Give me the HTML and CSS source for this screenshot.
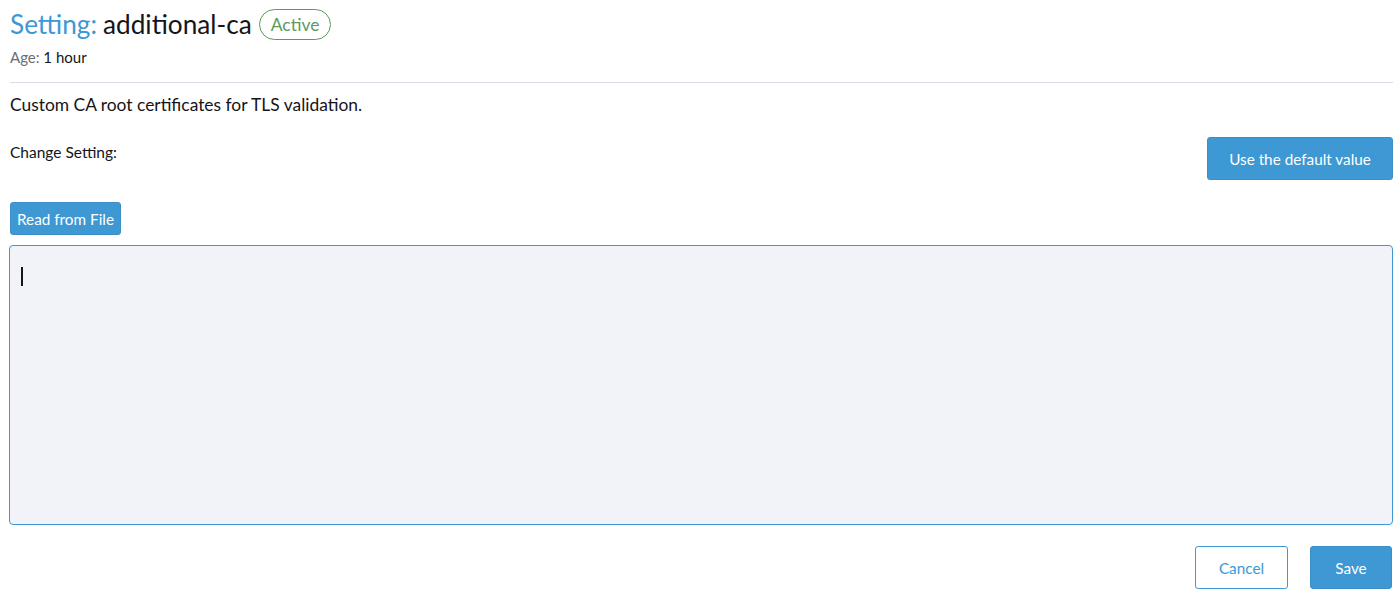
FILE: index.html
```html
<!DOCTYPE html>
<html>
<head>
<meta charset="utf-8">
<link rel="stylesheet" href="styles.css">
</head>
<body>
<div class="page">
  <header class="head">
    <h1 class="title"><span class="kind">Setting:</span> additional-ca <span class="badge">Active</span></h1>
    <div class="age"><span class="label">Age:</span> 1 hour</div>
  </header>
  <hr class="rule">
  <p class="desc">Custom CA root certificates for TLS validation.</p>
  <div class="change-row">
    <div class="change-label">Change Setting:</div>
    <button class="btn btn-primary btn-lg">Use the default value</button>
  </div>
  <div class="file-row">
    <button class="btn btn-primary btn-sm">Read from File</button>
  </div>
  <div class="editor"><span class="caret"></span></div>
  <div class="footer">
    <button class="btn btn-outline btn-lg">Cancel</button>
    <button class="btn btn-primary btn-lg btn-save">Save</button>
  </div>
</div>
</body>
</html>
```
FILE: styles.css
```css
* { box-sizing: border-box; }
html, body { margin: 0; padding: 0; background: #fff; }
body {
  font-family: Lato, "Open Sans", "Liberation Sans", sans-serif;
  color: #141419;
}
.page {
  padding: 0 7px 0 9px;
}
.head { padding-top: 8px; }
.title {
  margin: 0;
  font-size: 26.2px;
  font-weight: 400;
  line-height: 33px;
  display: flex;
  align-items: center;
  gap: 6px;
  padding-left: 1px;
}
.kind { color: #3d98d3; }
.badge {
  display: inline-block;
  font-size: 17.5px;
  color: #5d995d;
  border: 1px solid #5d995d;
  border-radius: 16px;
  padding: 0 11px;
  line-height: 29px;
  margin-left: 1px;
}
.age {
  margin-top: 7px;
  font-size: 15px;
  line-height: 18px;
  color: #141419;
  padding-left: 1px;
}
.age .label { color: #6c6c76; }
.rule {
  border: 0;
  border-top: 1px solid #dcdee7;
  margin: 16px 0 0 1px;
}
.desc {
  margin: 12px 0 0 1px;
  font-size: 17.4px;
  line-height: 20px;
}
.change-row {
  display: flex;
  justify-content: space-between;
  align-items: flex-start;
  margin-top: 22px;
}
.change-label {
  font-size: 15.5px;
  line-height: 18px;
  margin-top: 6px;
  margin-left: 1px;
}
.btn {
  font-family: inherit;
  border-radius: 3px;
  cursor: pointer;
  white-space: nowrap;
}
.btn-primary {
  background: #3d98d3;
  border: 1px solid #3a8fc7;
  color: #fff;
}
.btn-lg {
  height: 43px;
  font-size: 15.3px;
  padding: 0 22px;
}
.change-row .btn-lg { width: 186px; padding: 0; }
.file-row { margin-top: 22px; padding-left: 1px; }
.btn-sm {
  height: 33px;
  font-size: 15.3px;
  padding: 0;
  width: 111px;
}
.editor {
  margin-top: 10px;
  height: 280px;
  background: #f2f3f8;
  border: 1px solid #3d98d3;
  border-radius: 4px;
  padding: 21px 11px;
}
.caret {
  display: block;
  width: 1.5px;
  height: 19px;
  background: #141419;
}
.footer {
  display: flex;
  justify-content: flex-end;
  gap: 22px;
  margin-top: 21px;
  padding-right: 1px;
}
.btn-outline {
  background: #fff;
  border: 1px solid #3d98d3;
  color: #3d98d3;
  width: 93px;
  padding: 0;
}
.btn-save { width: 82px; padding: 0; }
```
